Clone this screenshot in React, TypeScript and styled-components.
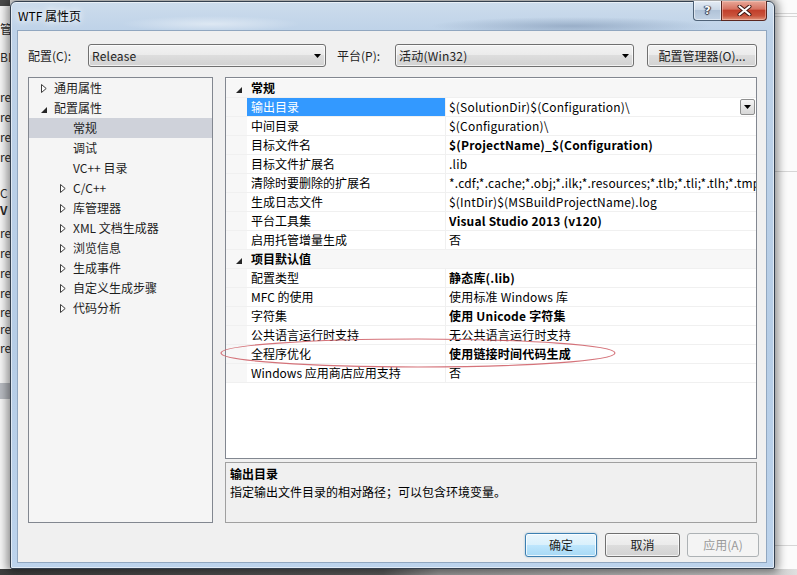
import React from 'react';
import styled, { createGlobalStyle, css } from 'styled-components';

const FONT = `"Noto Sans CJK SC", "Noto Sans", sans-serif`;

const Global = createGlobalStyle`
  html, body { margin: 0; padding: 0; }
  body {
    width: 797px; height: 575px; overflow: hidden;
    font-family: ${FONT};
    font-size: 12px;
    color: #1e1e1e;
    background: #f4f4f4;
  }
  * { box-sizing: border-box; }
`;

/* ---------- desktop / backdrop ---------- */
const Desktop = styled.div`
  position: relative;
  width: 797px;
  height: 575px;
  overflow: hidden;
  display: grid;
  grid-template-columns: 10px 1fr 22px;
  grid-template-rows: 1fr 6px;
  background: #f6f6f6;
`;

const LeftStrip = styled.div`
  grid-column: 1;
  grid-row: 1;
  display: flex;
  flex-direction: column;
  overflow: hidden;
  background: #f7f7f7;
  border-top: 6px solid #4a4a4a;
`;

const StripLine = styled.div<{ $h: number; $bold?: boolean; $band?: boolean }>`
  height: ${p => p.$h}px;
  flex: none;
  display: flex;
  align-items: flex-end;
  font-size: 12px;
  line-height: 14px;
  white-space: nowrap;
  color: #2a2a2a;
  font-weight: ${p => (p.$bold ? 700 : 400)};
  background: ${p => (p.$band ? '#b9bcc2' : 'transparent')};
`;

const RightStrip = styled.div`
  grid-column: 3;
  grid-row: 1;
  display: flex;
  flex-direction: column;
  background: #fbfbfb;
`;

const HLine = styled.div<{ $top: number }>`
  margin-top: ${p => p.$top}px;
  height: 1px;
  flex: none;
  background: #d6d6d6;
`;

const BottomStrip = styled.div`
  grid-column: 1 / 4;
  grid-row: 2;
  background: linear-gradient(90deg, #3e3e3e 0%, #5a5a5a 48%, #9a9a9a 55%, #c8c8c8 97%, #e0e0e0 100%);
`;

/* ---------- window ---------- */
const Window = styled.div`
  position: absolute;
  left: 10px;
  top: 1px;
  width: 765px;
  height: 568px;
  display: flex;
  flex-direction: column;
  border: 1px solid #34404f;
  border-radius: 6px 6px 2px 2px;
  padding: 0 7px 5px 6px;
  background:
    radial-gradient(ellipse 140px 9px at 560px 24px, rgba(80, 105, 140, 0.35), transparent),
    radial-gradient(ellipse 90px 8px at 200px 22px, rgba(255, 255, 255, 0.45), transparent),
    linear-gradient(180deg, #cddcec 0px, #bed2e8 30px, #b6cde6 60%, #bcd3ec 100%);
  box-shadow: 0 0 10px 3px rgba(0, 0, 0, 0.45), inset 0 0 0 1px rgba(255, 255, 255, 0.55);
`;

const TitleBar = styled.div`
  height: 28px;
  flex: none;
  display: flex;
  align-items: flex-start;
  padding-left: 1px;
`;

const Title = styled.div`
  flex: 1;
  margin-top: 6px;
  font-size: 12px;
  line-height: 16px;
  color: #000;
  text-shadow: 0 0 6px #fff, 0 0 10px rgba(255, 255, 255, 0.9);
`;

const CaptionButtons = styled.div`
  display: flex;
  margin-top: -1px;
`;

const CaptionBtn = styled.div<{ $kind: 'help' | 'close' }>`
  height: 20px;
  display: flex;
  align-items: center;
  justify-content: center;
  border: 1px solid #4f6277;
  border-top: none;
  ${p =>
    p.$kind === 'help'
      ? css`
          width: 28px;
          border-radius: 0 0 0 4px;
          border-right: none;
          background: linear-gradient(180deg, #e4ecf5 0%, #cbd8e7 45%, #b1c3d8 50%, #c2d2e4 100%);
          box-shadow: inset 0 0 0 1px rgba(255, 255, 255, 0.5);
        `
      : css`
          width: 46px;
          border-color: #5a2720;
          border-radius: 0 0 4px 0;
          background: linear-gradient(180deg, #e8a898 0%, #d67362 42%, #c2402c 50%, #c9533c 78%, #e0937a 100%);
          box-shadow: inset 0 0 0 1px rgba(255, 210, 200, 0.45);
        `}
`;

const HelpGlyph = styled.span`
  font-family: "DejaVu Sans", sans-serif;
  font-weight: 700;
  font-size: 11px;
  line-height: 12px;
  color: #fff;
  text-shadow: 0 0 1px #334, 1px 0 1px #334, -1px 0 1px #334, 0 1px 1px #334;
`;

/* ---------- client ---------- */
const Client = styled.div`
  flex: 1;
  display: flex;
  flex-direction: column;
  background: #f0f0f0;
  border: 1px solid #91a7c0;
  padding: 13px 9px 5px 10px;
`;

const TopRow = styled.div`
  height: 23px;
  flex: none;
  display: flex;
  align-items: stretch;
`;

const FieldLabel = styled.div<{ $w: number; $ml?: number }>`
  width: ${p => p.$w}px;
  margin-left: ${p => p.$ml ?? 0}px;
  flex: none;
  display: flex;
  align-items: center;
  line-height: 16px;
`;

const bevel = css`
  border: 1px solid #707070;
  border-radius: 3px;
  background: linear-gradient(180deg, #f3f3f3 0%, #ebebeb 49%, #dddddd 50%, #d2d2d2 100%);
  box-shadow: inset 0 0 0 1px rgba(255, 255, 255, 0.7);
`;

const Combo = styled.div<{ $w: number }>`
  ${bevel}
  width: ${p => p.$w}px;
  flex: none;
  display: flex;
  align-items: center;
  padding: 0 4px 0 3px;
  line-height: 16px;
  letter-spacing: 0.2px;
`;

const ComboText = styled.span`
  flex: 1;
`;

const PushButton = styled.div<{ $variant?: 'default' | 'disabled'; $w?: number; $ml?: number }>`
  ${bevel}
  ${p => (p.$w ? `width: ${p.$w}px; flex: none;` : 'flex: 1;')}
  margin-left: ${p => p.$ml ?? 0}px;
  display: flex;
  align-items: center;
  justify-content: center;
  line-height: 16px;
  color: #1e1e1e;
  ${p =>
    p.$variant === 'default' &&
    css`
      border-color: #3c7fb1;
      background: linear-gradient(180deg, #eaf6fd 0%, #d9f0fc 49%, #bee6fd 50%, #a7d9f5 100%);
      box-shadow: inset 0 0 0 1px rgba(255, 255, 255, 0.75), 0 0 2px rgba(60, 127, 177, 0.5);
    `}
  ${p =>
    p.$variant === 'disabled' &&
    css`
      border-color: #adb2b5;
      background: #f4f4f4;
      box-shadow: none;
      color: #9a9a9a;
    `}
`;

const MainRow = styled.div`
  flex: 1;
  margin-top: 10px;
  display: flex;
  gap: 12px;
  min-height: 0;
`;

/* ---------- tree ---------- */
const Tree = styled.div`
  width: 185px;
  flex: none;
  border: 1px solid #828790;
  background: #f5f5f5;
  display: flex;
  flex-direction: column;
`;

const TreeRow = styled.div<{ $level: number; $selected?: boolean }>`
  height: 20px;
  flex: none;
  display: flex;
  align-items: center;
  padding-left: ${p => 9 + p.$level * 19}px;
  line-height: 16px;
  color: #1e1e1e;
  background: ${p => (p.$selected ? '#cfd2da' : 'transparent')};
`;

const Expander = styled.span`
  width: 16px;
  flex: none;
  display: flex;
  align-items: center;
  padding-left: 3px;
`;

/* ---------- right column ---------- */
const RightCol = styled.div`
  flex: 1;
  display: flex;
  flex-direction: column;
  gap: 3px;
  min-width: 0;
`;

const Grid = styled.div`
  flex: 1;
  border: 1px solid #828790;
  background: #ffffff;
  padding-top: 1px;
  display: flex;
  flex-direction: column;
  overflow: hidden;
`;

const GridRow = styled.div<{ $category?: boolean }>`
  height: 19px;
  flex: none;
  display: flex;
  border-bottom: 1px solid #f0f0f0;
  background: ${p => (p.$category ? '#f7f7f7' : '#ffffff')};
  line-height: 16px;
  color: #000;
`;

const Margin = styled.div`
  width: 21px;
  flex: none;
  display: flex;
  align-items: center;
  justify-content: flex-end;
  padding-right: 5px;
  background: #f7f7f7;
`;

const CategoryText = styled.div`
  display: flex;
  align-items: center;
  padding-left: 4px;
  font-weight: 700;
`;

const NameCell = styled.div<{ $selected?: boolean }>`
  width: 199px;
  flex: none;
  display: flex;
  align-items: center;
  padding-left: 4px;
  border-right: 1px solid #f0f0f0;
  white-space: nowrap;
  overflow: hidden;
  background: ${p => (p.$selected ? '#3399ff' : 'transparent')};
  color: ${p => (p.$selected ? '#ffffff' : '#000')};
`;

const ValueCell = styled.div<{ $bold?: boolean }>`
  flex: 1;
  min-width: 0;
  display: flex;
  align-items: center;
  padding-left: 3px;
  letter-spacing: 0.2px;
  font-weight: ${p => (p.$bold ? 700 : 400)};
`;

const ValueText = styled.span`
  flex: 1;
  min-width: 0;
  white-space: nowrap;
  overflow: hidden;
`;

const DropBtn = styled.div`
  width: 15px;
  height: 16px;
  flex: none;
  margin-right: 1px;
  border: 1px solid #8e8f8f;
  border-radius: 2px;
  background: linear-gradient(180deg, #f6f6f6 0%, #e4e4e4 50%, #d8d8d8 100%);
  display: flex;
  align-items: center;
  justify-content: center;
`;

const Desc = styled.div`
  height: 61px;
  flex: none;
  border: 1px solid #a0a0a0;
  background: #f0f0f0;
  padding: 2px 4px;
  line-height: 18px;
  color: #000;
`;

const DescTitle = styled.div`
  font-weight: 700;
`;

const ButtonRow = styled.div`
  height: 24px;
  flex: none;
  margin-top: 10px;
  margin-right: -2px;
  display: flex;
  justify-content: flex-end;
`;

/* ---------- overlay annotation ---------- */
const Annotation = styled.svg`
  position: absolute;
  left: 218px;
  top: 336px;
  width: 404px;
  height: 34px;
  pointer-events: none;
`;

/* ---------- icons ---------- */
const Collapsed = () => (
  <svg width="6" height="9" viewBox="0 0 6 9">
    <path d="M0.5 0.5 L5.2 4.5 L0.5 8.5 Z" fill="#ffffff" stroke="#3c3c3c" strokeWidth="1" />
  </svg>
);

const Expanded = () => (
  <svg width="6" height="6" viewBox="0 0 6 6" style={{ marginTop: 3 }}>
    <path d="M6 0 L6 6 L0 6 Z" fill="#262626" />
  </svg>
);

const ArrowDown = () => (
  <svg width="7" height="4" viewBox="0 0 7 4">
    <path d="M0 0 L7 0 L3.5 4 Z" fill="#000" />
  </svg>
);

const CloseX = () => (
  <svg width="15" height="11" viewBox="0 0 15 11">
    <path d="M2.5 1.5 L12.5 9.5 M12.5 1.5 L2.5 9.5" stroke="#3b1510" strokeWidth="4" strokeLinecap="round" />
    <path d="M2.5 1.5 L12.5 9.5 M12.5 1.5 L2.5 9.5" stroke="#ffffff" strokeWidth="2.2" strokeLinecap="round" />
  </svg>
);

/* ---------- data ---------- */
type TreeItem = { level: number; exp: 'open' | 'closed' | null; text: string; selected?: boolean };
const treeItems: TreeItem[] = [
  { level: 0, exp: 'closed', text: '通用属性' },
  { level: 0, exp: 'open', text: '配置属性' },
  { level: 1, exp: null, text: '常规', selected: true },
  { level: 1, exp: null, text: '调试' },
  { level: 1, exp: null, text: 'VC++ 目录' },
  { level: 1, exp: 'closed', text: 'C/C++' },
  { level: 1, exp: 'closed', text: '库管理器' },
  { level: 1, exp: 'closed', text: 'XML 文档生成器' },
  { level: 1, exp: 'closed', text: '浏览信息' },
  { level: 1, exp: 'closed', text: '生成事件' },
  { level: 1, exp: 'closed', text: '自定义生成步骤' },
  { level: 1, exp: 'closed', text: '代码分析' },
];

type GridItem =
  | { category: string }
  | { name: string; value: string; bold?: boolean; selected?: boolean };

const gridItems: GridItem[] = [
  { category: '常规' },
  { name: '输出目录', value: '$(SolutionDir)$(Configuration)\\', selected: true },
  { name: '中间目录', value: '$(Configuration)\\' },
  { name: '目标文件名', value: '$(ProjectName)_$(Configuration)', bold: true },
  { name: '目标文件扩展名', value: '.lib' },
  {
    name: '清除时要删除的扩展名',
    value: '*.cdf;*.cache;*.obj;*.ilk;*.resources;*.tlb;*.tli;*.tlh;*.tmp;*.rsp;*.pgc;*.pgd;*.meta;$(TargetPath)',
  },
  { name: '生成日志文件', value: '$(IntDir)$(MSBuildProjectName).log' },
  { name: '平台工具集', value: 'Visual Studio 2013 (v120)', bold: true },
  { name: '启用托管增量生成', value: '否' },
  { category: '项目默认值' },
  { name: '配置类型', value: '静态库(.lib)', bold: true },
  { name: 'MFC 的使用', value: '使用标准 Windows 库' },
  { name: '字符集', value: '使用 Unicode 字符集', bold: true },
  { name: '公共语言运行时支持', value: '无公共语言运行时支持' },
  { name: '全程序优化', value: '使用链接时间代码生成', bold: true },
  { name: 'Windows 应用商店应用支持', value: '否' },
];

const stripLines: { h: number; t: string; bold?: boolean; band?: boolean }[] = [
  { h: 30, t: '管' },
  { h: 28, t: 'BL' },
  { h: 40, t: 're' },
  { h: 20, t: 're' },
  { h: 20, t: 're' },
  { h: 20, t: 're' },
  { h: 36, t: 'C' },
  { h: 17, t: 'V', bold: true },
  { h: 23, t: 're' },
  { h: 20, t: 're' },
  { h: 20, t: 're' },
  { h: 20, t: 're' },
  { h: 19, t: 're' },
  { h: 17, t: 're' },
  { h: 19, t: 're' },
  { h: 28, t: '' },
  { h: 16, t: '', band: true },
];

export default function App() {
  return (
    <>
      <Global />
      <Desktop>
        <LeftStrip>
          {stripLines.map((l, i) => (
            <StripLine key={i} $h={l.h} $bold={l.bold} $band={l.band}>
              {l.t}
            </StripLine>
          ))}
        </LeftStrip>
        <RightStrip>
          <HLine $top={13} />
          <HLine $top={2} />
          <HLine $top={154} />
          <HLine $top={373} />
        </RightStrip>
        <BottomStrip />

        <Window>
          <TitleBar>
            <Title>WTF 属性页</Title>
            <CaptionButtons>
              <CaptionBtn $kind="help">
                <HelpGlyph>?</HelpGlyph>
              </CaptionBtn>
              <CaptionBtn $kind="close">
                <CloseX />
              </CaptionBtn>
            </CaptionButtons>
          </TitleBar>

          <Client>
            <TopRow>
              <FieldLabel $w={60}>配置(C):</FieldLabel>
              <Combo $w={238}>
                <ComboText>Release</ComboText>
                <ArrowDown />
              </Combo>
              <FieldLabel $w={58} $ml={11}>平台(P):</FieldLabel>
              <Combo $w={239}>
                <ComboText>活动(Win32)</ComboText>
                <ArrowDown />
              </Combo>
              <PushButton $ml={13}>配置管理器(O)...</PushButton>
            </TopRow>

            <MainRow>
              <Tree>
                {treeItems.map((t, i) => (
                  <TreeRow key={i} $level={t.level} $selected={t.selected}>
                    <Expander>
                      {t.exp === 'closed' && <Collapsed />}
                      {t.exp === 'open' && <Expanded />}
                    </Expander>
                    {t.text}
                  </TreeRow>
                ))}
              </Tree>

              <RightCol>
                <Grid>
                  {gridItems.map((g, i) =>
                    'category' in g ? (
                      <GridRow key={i} $category>
                        <Margin>
                          <Expanded />
                        </Margin>
                        <CategoryText>{g.category}</CategoryText>
                      </GridRow>
                    ) : (
                      <GridRow key={i}>
                        <Margin />
                        <NameCell $selected={g.selected}>{g.name}</NameCell>
                        <ValueCell $bold={g.bold}>
                          <ValueText>{g.value}</ValueText>
                          {g.selected && (
                            <DropBtn>
                              <ArrowDown />
                            </DropBtn>
                          )}
                        </ValueCell>
                      </GridRow>
                    )
                  )}
                </Grid>
                <Desc>
                  <DescTitle>输出目录</DescTitle>
                  <div>指定输出文件目录的相对路径；可以包含环境变量。</div>
                </Desc>
              </RightCol>
            </MainRow>

            <ButtonRow>
              <PushButton $variant="default" $w={72}>确定</PushButton>
              <PushButton $w={75} $ml={8}>取消</PushButton>
              <PushButton $variant="disabled" $w={72} $ml={7}>应用(A)</PushButton>
            </ButtonRow>
          </Client>
        </Window>

        <Annotation viewBox="0 0 404 34">
          <ellipse cx="200" cy="17" rx="197" ry="14" fill="none" stroke="#d0646c" strokeWidth="1.2" opacity="0.9" />
        </Annotation>
      </Desktop>
    </>
  );
}
